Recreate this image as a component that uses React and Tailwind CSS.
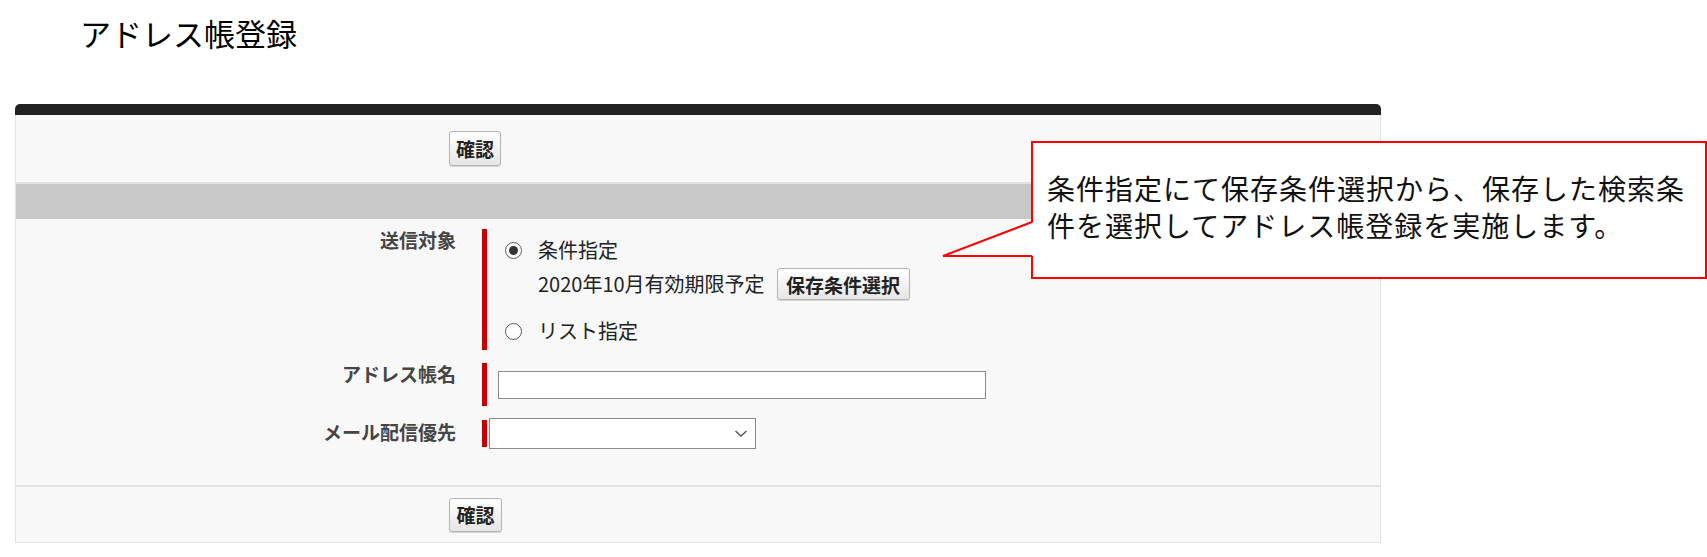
import React from "react";

// ── Small pieces ──────────────────────────────────────────────────────────────
const font = { fontFamily: '"Noto Sans CJK JP", "Noto Sans", sans-serif' };

const Btn = ({ children, className = "" }) => (
  <button
    className={`flex items-center justify-center rounded-[3px] border border-[#b4b4b4] bg-gradient-to-b from-white to-[#e6e6e6] text-[19px] font-bold text-[#222] leading-none shadow-[0_1px_1px_rgba(0,0,0,0.15)] ${className}`}
  >
    {children}
  </button>
);

const Radio = ({ checked }) => (
  <span className="flex h-[17px] w-[17px] items-center justify-center rounded-full border border-[#5a5a5a] bg-white">
    {checked && <span className="h-[9px] w-[9px] rounded-full bg-[#333]" />}
  </span>
);

const Label = ({ children, className = "" }) => (
  <div className={`w-[466px] shrink-0 pr-[26px] text-right text-[19px] font-bold leading-[22px] text-[#454545] ${className}`}>
    {children}
  </div>
);

// ── Page ──────────────────────────────────────────────────────────────────────
export default function App() {
  return (
    <div className="relative min-h-[557px] w-[1707px] bg-white" style={font}>
      {/* title */}
      <h1 className="pl-[80px] pt-[14px] text-[31px] font-normal leading-[38px] text-black">
        アドレス帳登録
      </h1>

      {/* panel */}
      <div className="ml-[15px] mt-[52px] w-[1366px]">
        <div className="h-[11px] rounded-t-[5px] bg-[#222]" />
        <div className="border-x border-b border-[#e2e2e2] bg-[#f8f8f8]">
          <div className="flex h-[69px] items-center border-b-2 border-[#e2e2e2] pl-[433px]">
            <Btn className="h-[35px] w-[52px]">確認</Btn>
          </div>
          <div className="h-[35px] bg-[#c8c8c8]" />

          <div className="pt-[10px] pb-[36px]">
            {/* 送信対象 */}
            <div className="flex items-start">
              <Label>送信対象</Label>
              <div className="h-[121px] w-[5px] shrink-0 bg-[#c80000]" />
              <div className="flex flex-col pl-[18px] pt-[8px] text-[20px] text-[#222]">
                <div className="flex h-[26px] items-center gap-[16px]">
                  <Radio checked />
                  <span className="leading-none">条件指定</span>
                </div>
                <div className="mt-[5px] flex items-center gap-[12px] pl-[33px]">
                  <span className="leading-none">2020年10月有効期限予定</span>
                  <Btn className="h-[32px] w-[133px]">保存条件選択</Btn>
                </div>
                <div className="mt-[18px] flex h-[26px] items-center gap-[16px]">
                  <Radio />
                  <span className="leading-none">リスト指定</span>
                </div>
              </div>
            </div>

            {/* アドレス帳名 */}
            <div className="mt-[13px] flex items-start">
              <Label>アドレス帳名</Label>
              <div className="h-[43px] w-[5px] shrink-0 bg-[#c80000]" />
              <div className="pl-[11px] pt-[8px]">
                <div className="h-[28px] w-[488px] border border-[#8a8a8a] bg-white" />
              </div>
            </div>

            {/* メール配信優先 */}
            <div className="mt-[12px] flex items-start">
              <Label className="pt-[3px]">メール配信優先</Label>
              <div className="mt-[2px] h-[27px] w-[5px] shrink-0 bg-[#c80000]" />
              <div className="pl-[2px]">
                <div className="flex h-[31px] w-[267px] items-center justify-end border border-[#8a8a8a] bg-white pr-[7px]">
                  <svg width="14" height="9" viewBox="0 0 14 9" fill="none">
                    <path d="M1.5 2 L7 7 L12.5 2" stroke="#555" strokeWidth="1.4" />
                  </svg>
                </div>
              </div>
            </div>
          </div>

          <div className="flex h-[57px] items-center border-t-2 border-[#e2e2e2] pl-[433px]">
            <Btn className="h-[34px] w-[53px]">確認</Btn>
          </div>
        </div>
      </div>

      {/* callout */}
      <div className="absolute left-[1031px] top-[141px] h-[138px] w-[676px] border-2 border-[#ff0000] bg-white pl-[14px] pt-[27px]">
        <p className="text-[28px] leading-[37px] tracking-[1px] text-[#111]">
          条件指定にて保存条件選択から、保存した検索条
          <br />
          件を選択してアドレス帳登録を実施します。
        </p>
      </div>
      <svg className="absolute left-[940px] top-[218px]" width="95" height="42" viewBox="0 0 95 42">
        <polygon points="94,4 3,38 94,38" fill="white" />
        <polyline points="92,4 3,38 92,38" fill="none" stroke="#ff0000" strokeWidth="2" />
      </svg>
    </div>
  );
}
